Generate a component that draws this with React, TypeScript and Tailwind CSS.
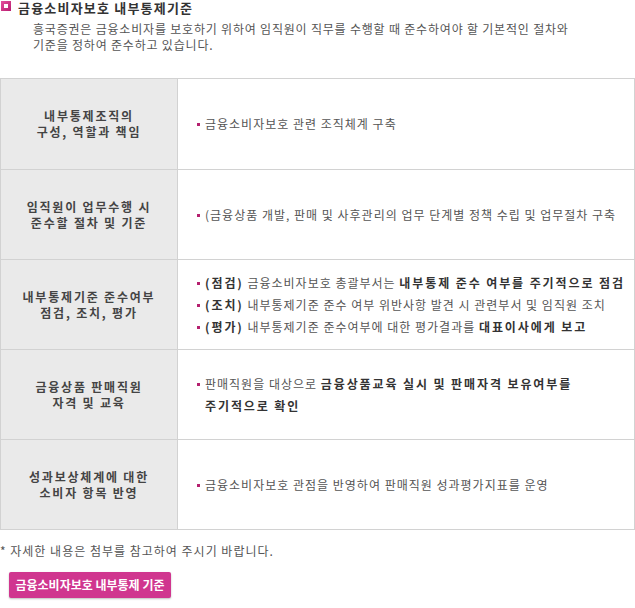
import React from "react";

const font = { fontFamily: '"Noto Sans CJK KR", "Noto Sans", sans-serif' };

function Bullet() {
  return <span className="inline-block w-[3px] h-[3px] bg-[#b5206f] mr-[5px] align-middle relative top-[-1px]" />;
}

function B({ children }: { children: React.ReactNode }) {
  return <b className="tracking-[1.9px] text-[#333]">{children}</b>;
}

const rows: { title: React.ReactNode; body: React.ReactNode }[] = [
  {
    title: (
      <>
        내부통제조직의
        <br />
        구성, 역할과 책임
      </>
    ),
    body: (
      <p>
        <Bullet />
        금융소비자보호 관련 조직체계 구축
      </p>
    ),
  },
  {
    title: (
      <>
        임직원이 업무수행 시
        <br />
        준수할 절차 및 기준
      </>
    ),
    body: (
      <p>
        <Bullet />
        (금융상품 개발, 판매 및 사후관리의 업무 단계별 정책 수립 및 업무절차 구축
      </p>
    ),
  },
  {
    title: (
      <>
        내부통제기준 준수여부
        <br />
        점검, 조치, 평가
      </>
    ),
    body: (
      <div className="leading-[22px]">
        <p>
          <Bullet />
          <B>(점검)</B> 금융소비자보호 총괄부서는 <B>내부통제 준수 여부를 주기적으로 점검</B>
        </p>
        <p>
          <Bullet />
          <B>(조치)</B> 내부통제기준 준수 여부 위반사항 발견 시 관련부서 및 임직원 조치
        </p>
        <p>
          <Bullet />
          <B>(평가)</B> 내부통제기준 준수여부에 대한 평가결과를 <B>대표이사에게 보고</B>
        </p>
      </div>
    ),
  },
  {
    title: (
      <>
        금융상품 판매직원
        <br />
        자격 및 교육
      </>
    ),
    body: (
      <div className="leading-[22px]">
        <p>
          <Bullet />
          판매직원을 대상으로 <B>금융상품교육 실시 및 판매자격 보유여부를</B>
        </p>
        <p className="pl-[8px]">
          <B>주기적으로 확인</B>
        </p>
      </div>
    ),
  },
  {
    title: (
      <>
        성과보상체계에 대한
        <br />
        소비자 항목 반영
      </>
    ),
    body: (
      <p>
        <Bullet />
        금융소비자보호 관점을 반영하여 판매직원 성과평가지표를 운영
      </p>
    ),
  },
];

export default function App() {
  return (
    <div className="w-[635px] h-[608px] bg-white text-[12px] text-[#555]" style={font}>
      <div className="flex items-start h-[16px] pl-[1px]">
        <span className="mt-[1px] w-[10px] h-[10px] bg-gradient-to-br from-[#e5509f] to-[#b8196f] flex items-center justify-center">
          <span className="w-[4px] h-[4px] bg-white" />
        </span>
        <h2 className="ml-[7px] text-[13px] font-bold text-[#333] leading-[16px] tracking-[1.2px]">금융소비자보호 내부통제기준</h2>
      </div>
      <p className="pl-[33px] mt-[5px] leading-[16px] text-[#555] tracking-[0.8px]">
        흥국증권은 금융소비자를 보호하기 위하여 임직원이 직무를 수행할 때 준수하여야 할 기본적인 절차와
        <br />
        기준을 정하여 준수하고 있습니다.
      </p>
      <div className="mt-[25px] border border-[#d2d2d2]">
        {rows.map((r, i) => (
          <div key={i} className={`flex h-[90px] ${i > 0 ? "border-t border-[#d2d2d2]" : ""}`}>
            <div className="w-[177px] shrink-0 bg-[#eaeaea] border-r border-[#d2d2d2] flex items-center justify-center text-center font-bold text-[#444] leading-[16px] tracking-[1.8px]">
              <div>{r.title}</div>
            </div>
            <div className="flex-1 flex items-center pl-[19px] text-[#555] tracking-[1px]">{r.body}</div>
          </div>
        ))}
      </div>
      <p className="mt-[13px] text-[#555] leading-[16px] tracking-[1px]">* 자세한 내용은 첨부를 참고하여 주시기 바랍니다.</p>
      <button className="mt-[13px] ml-[9px] w-[162px] h-[26px] bg-[#d0368f] rounded-[2px] shadow-[0_1px_2px_rgba(0,0,0,0.25)] text-white font-bold text-[12px] flex items-center justify-center">
        금융소비자보호 내부통제 기준
      </button>
    </div>
  );
}
